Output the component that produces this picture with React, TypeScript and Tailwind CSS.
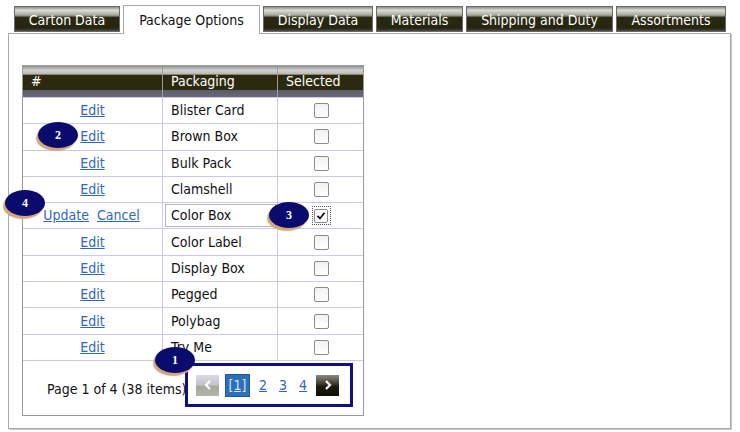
import React from "react";

const rows = [
  "Blister Card",
  "Brown Box",
  "Bulk Pack",
  "Clamshell",
  "Color Box",
  "Color Label",
  "Display Box",
  "Pegged",
  "Polybag",
  "Try Me",
];

const tabs = [
  { label: "Carton Data", w: "w-[106px]" },
  { label: "Package Options", w: "w-[137px]", active: true },
  { label: "Display Data", w: "w-[110px]" },
  { label: "Materials", w: "w-[87px]" },
  { label: "Shipping and Duty", w: "w-[147px]" },
  { label: "Assortments", w: "w-[110px]" },
];

function Badge({ n, cls }: { n: string; cls: string }) {
  return (
    <div
      className={`absolute w-[40px] h-[26px] rounded-[50%] bg-[#0b0b6e] shadow-[-2px_3px_1px_#d2a77a] flex items-center justify-center text-white text-[12px] font-bold font-['Liberation_Serif',serif] z-10 ${cls}`}
    >
      {n}
    </div>
  );
}

function Checkbox({ checked }: { checked?: boolean }) {
  if (checked) {
    return (
      <div className="w-[19px] h-[19px] border border-dotted border-[#555] flex items-center justify-center">
        <div className="w-[14px] h-[14px] border border-[#8a8a8a] rounded-[2px] bg-white flex items-center justify-center">
          <svg width="10" height="10" viewBox="0 0 10 10">
            <path d="M1.5 5 L4 7.5 L8.5 1.8" stroke="#111" strokeWidth="1.8" fill="none" />
          </svg>
        </div>
      </div>
    );
  }
  return (
    <div className="w-[15px] h-[15px] border border-[#8a8a8a] rounded-[2px] bg-gradient-to-b from-[#f2f2f2] to-white" />
  );
}

export default function App() {
  return (
    <div className="w-[740px] h-[432px] bg-white relative font-['DejaVu_Sans',sans-serif] [font-stretch:condensed] text-[14px] text-[#111] overflow-hidden">
      {/* Tabs */}
      <div className="flex pl-[14px] pt-[5px] gap-[3px] h-[33px] items-end relative z-[1]">
        {tabs.map((t) =>
          t.active ? (
            <div
              key={t.label}
              className={`${t.w} h-[29px] bg-white border border-[#a9a9a9] border-b-0 flex items-center justify-center text-[#111] -mb-[1px]`}
            >
              {t.label}
            </div>
          ) : (
            <div
              key={t.label}
              className={`${t.w} h-[26px] mb-[1px] border border-[#6a6a6a] bg-[linear-gradient(to_bottom,#8c8c8c_0%,#dcdcd8_14%,#a6a69c_34%,#2a2a12_44%,#262610_88%,#4c4c44_100%)] flex items-center justify-center text-white pt-[2px]`}
            >
              {t.label}
            </div>
          )
        )}
      </div>

      {/* Panel */}
      <div className="mx-[8px] w-[723px] h-[396px] border border-[#a9a9a9] shadow-[1px_1px_0_#c8c8c8] pl-[13px] pt-[31px] relative">
        <div className="w-[342px] border border-[#9a9a9a]">
          {/* header */}
          <div className="flex h-[31px] bg-[linear-gradient(to_bottom,#8e8e96_0%,#d2d2d2_14%,#b8b8b0_26%,#2b2a0e_30%,#2b2a0e_76%,#5c5c6a_78%,#686878_100%)] text-white">
            <div className="w-[140px] pl-[8px] pt-[5px] border-r border-[#9c9c9c]">#</div>
            <div className="w-[115px] pl-[8px] pt-[5px] border-r border-[#9c9c9c]">Packaging</div>
            <div className="flex-1 pl-[8px] pt-[5px]">Selected</div>
          </div>
          {rows.map((r) => {
            const editing = r === "Color Box";
            return (
              <div key={r} className="flex h-[26.3px] border-t border-[#c9c9f0]">
                <div className="w-[140px] border-r border-[#c9c9f0] flex items-center justify-center">
                  {editing ? (
                    <div className="flex gap-[8px] pl-[2px] pr-[4px] text-[#2e66c0] underline">
                      <span>Update</span>
                      <span>Cancel</span>
                    </div>
                  ) : (
                    <span className="text-[#2e66c0] underline">Edit</span>
                  )}
                </div>
                <div className="w-[115px] border-r border-[#c9c9f0] flex items-center">
                  {editing ? (
                    <div className="ml-[2px] w-[111px] h-[23px] border border-[#b8b8b8] flex items-center pl-[5px]">
                      {r}
                    </div>
                  ) : (
                    <span className="pl-[8px]">{r}</span>
                  )}
                </div>
                <div className="flex-1 flex items-center justify-center pl-[1px]">
                  <Checkbox checked={editing} />
                </div>
              </div>
            );
          })}
          {/* pager */}
          <div className="h-[55px] border-t border-[#c9c9f0] flex items-center pl-[24px] pt-[3px]">
            <span>Page 1 of 4 (38 items)</span>
          </div>
        </div>

        {/* pager box overlay */}
        <div className="absolute left-[176px] top-[329px] w-[168px] h-[44px] border-[3px] border-[#10107e] flex items-center pl-[8px] gap-[6px] z-[5]">
          <div className="w-[23px] h-[21px] bg-[linear-gradient(to_bottom,#dcdce4_0%,#c4c4cc_45%,#a8a89c_55%,#b4b4aa_100%)] flex items-center justify-center">
            <svg width="8" height="10" viewBox="0 0 8 10">
              <path d="M6 1 L2 5 L6 9" stroke="#fff" strokeWidth="2.2" fill="none" />
            </svg>
          </div>
          <div className="w-[25px] h-[23px] bg-[#2d70b6] border border-[#1d5a9a] flex items-center justify-center text-[#cfe3ff] underline">
            [1]
          </div>
          <span className="text-[#2e66c0] underline ml-[3px]">2</span>
          <span className="text-[#2e66c0] underline ml-[6px]">3</span>
          <span className="text-[#2e66c0] underline ml-[6px]">4</span>
          <div className="w-[23px] h-[21px] ml-[3px] bg-[linear-gradient(to_bottom,#8a8a84_0%,#4a4a3c_35%,#1c1c0c_55%,#0e0e06_100%)] flex items-center justify-center">
            <svg width="8" height="10" viewBox="0 0 8 10">
              <path d="M2 1 L6 5 L2 9" stroke="#fff" strokeWidth="2.2" fill="none" />
            </svg>
          </div>
        </div>
      </div>

      {/* Badges */}
      <Badge n="2" cls="left-[38px] top-[122px]" />
      <Badge n="4" cls="left-[5px] top-[190px]" />
      <Badge n="3" cls="left-[269px] top-[202px]" />
      <Badge n="1" cls="left-[155px] top-[347px]" />
    </div>
  );
}
